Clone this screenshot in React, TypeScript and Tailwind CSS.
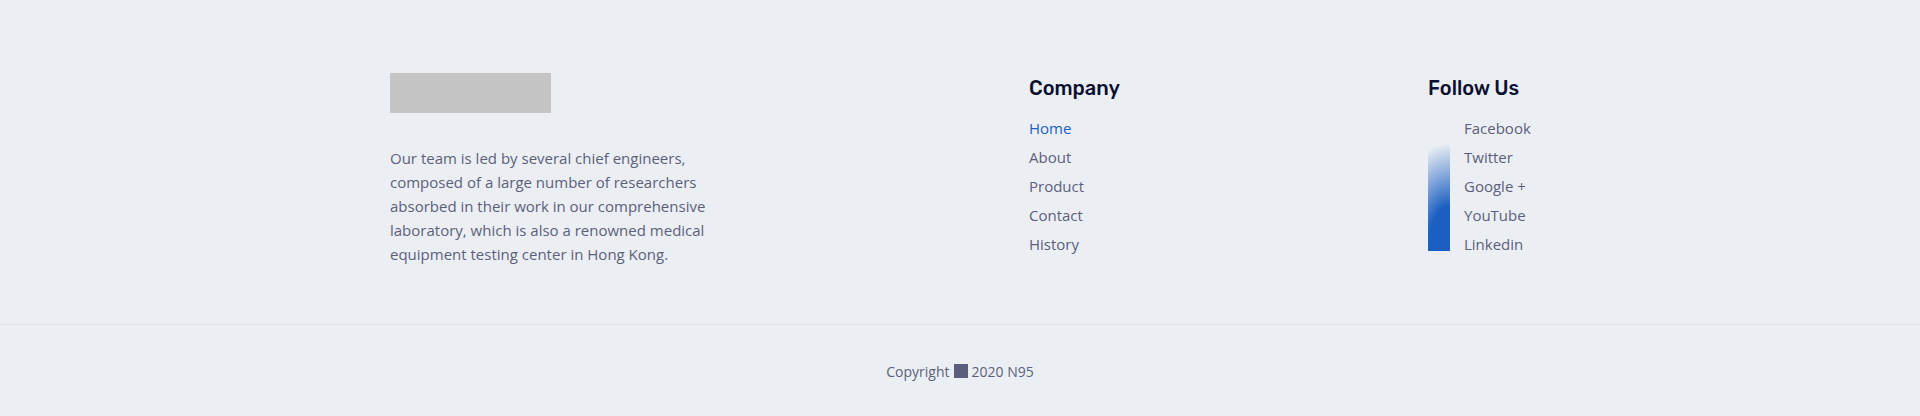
const company = ["Home", "About", "Product", "Contact", "History"];
const social = ["Facebook", "Twitter", "Google +", "YouTube", "Linkedin"];

export default function App() {
  return (
    <footer className="bg-[#ebeff4] pt-[73px] font-['Open_Sans',sans-serif] text-[15px] text-[#5c5f7b]">
      <div className="mx-auto flex max-w-[1140px] pb-[58px]">
        <div className="w-[639px] shrink-0">
          <div className="h-10 w-[161px] bg-[#c4c4c4]" />
          <p className="mt-[33px] max-w-[330px] leading-6">
            Our team is led by several chief engineers, composed of a large number of researchers absorbed in their work in our comprehensive laboratory, which is also a renowned medical equipment testing center in Hong Kong.
          </p>
        </div>
        <nav className="w-[399px] shrink-0" aria-labelledby="company">
          <h2 id="company" className="font-['Rubik','Roboto',sans-serif] text-xl leading-[30px] font-medium text-[#0b1030]">Company</h2>
          <ul className="mt-[11px]">
            {company.map((item) => (
              <li key={item} className="h-[29px] leading-[29px]">
                <a href="#" className={item === "Home" ? "text-[#1b61c4]" : ""}>{item}</a>
              </li>
            ))}
          </ul>
        </nav>
        <nav className="shrink-0" aria-labelledby="follow">
          <h2 id="follow" className="font-['Rubik','Roboto',sans-serif] text-xl leading-[30px] font-medium text-[#0b1030]">Follow Us</h2>
          <div className="mt-[11px] flex gap-[14px]">
            <div className="mt-[31px] h-[106px] w-[22px] bg-[radial-gradient(58px_100px_at_100%_92%,#1b5fc1_36%,#ebeff4_100%)]" />
            <ul>
              {social.map((item) => (
                <li key={item} className="h-[29px] leading-[29px]"><a href="#">{item}</a></li>
              ))}
            </ul>
          </div>
        </nav>
      </div>
      <div className="flex items-center justify-center gap-1 border-t border-[#dfe3e9] pt-[37px] pb-[34px] text-sm">
        <span>Copyright</span>
        <span className="mb-[2px] size-[14px] bg-[#5c5f7b]" />
        <span>2020 N95</span>
      </div>
    </footer>
  );
}
